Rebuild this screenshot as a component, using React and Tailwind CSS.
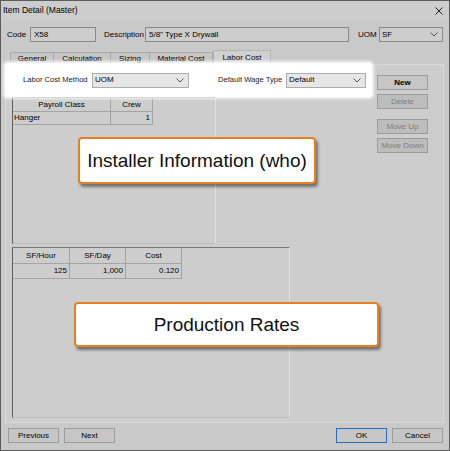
import React from "react";

const Chevron = () => (
  <svg width="8" height="5" viewBox="0 0 8 5" className="shrink-0">
    <path d="M0.5 0.5 L4 4 L7.5 0.5" fill="none" stroke="#555" strokeWidth="1" />
  </svg>
);

const Select = ({ value, className }) => (
  <div className={`h-[15px] shrink-0 flex items-center justify-between pl-[2px] pr-[4px] border ${className}`}>
    <span>{value}</span>
    <Chevron />
  </div>
);

const Btn = ({ label, disabled, primary, className = "" }) => (
  <div
    className={`w-[51px] h-[15px] shrink-0 whitespace-nowrap flex items-center justify-center border ${
      primary ? "border-[#2a6bc4] border-[1.5px]" : "border-[#9c9c9c]"
    } ${disabled ? "bg-[#bdbdbd] text-[#7d7d7d]" : "bg-[#c6c6c6] text-black"} ${className}`}
  >
    {label}
  </div>
);

const Callout = ({ text, className }) => (
  <div
    className={`absolute bg-white border-2 border-[#e8801f] rounded-[4px] shadow-[2px_3px_3px_rgba(0,0,0,0.45)] flex items-center justify-center text-[19px] text-[#111] ${className}`}
  >
    {text}
  </div>
);

export default function App() {
  const tabs = [
    { name: "General", w: "w-[44px]" },
    { name: "Calculation", w: "w-[58px]" },
    { name: "Sizing", w: "w-[40px]" },
    { name: "Material Cost", w: "w-[64px]" },
  ];

  return (
    <div className="relative w-[450px] h-[451px] bg-[#c9c9c9] border border-[#5c5c5c] flex flex-col font-['Liberation_Sans',Arial,sans-serif] text-[8px] leading-none text-black overflow-hidden whitespace-nowrap">
      {/* title bar */}
      <div className="h-[19px] flex items-center justify-between pl-[2px] pr-[6px] bg-[#cdcdcd]">
        <span className="text-[8.5px]">Item Detail (Master)</span>
        <svg width="8" height="8" viewBox="0 0 8 8">
          <path d="M0.5 0.5 L7.5 7.5 M7.5 0.5 L0.5 7.5" stroke="#222" strokeWidth="1" />
        </svg>
      </div>

      {/* code / description / uom */}
      <div className="mt-[7px] h-[15px] flex items-center pl-[6px]">
        <span className="w-[23px] shrink-0">Code</span>
        <div className="w-[66px] h-[15px] shrink-0 flex items-center pl-[3px] bg-[#cdcdcd] border border-[#8a8a8a]">X58</div>
        <span className="ml-[8px] w-[41px] shrink-0">Description</span>
        <div className="w-[204px] h-[15px] shrink-0 flex items-center pl-[3px] bg-[#cdcdcd] border border-[#8a8a8a]">5/8" Type X Drywall</div>
        <span className="ml-[9px] w-[21px] shrink-0">UOM</span>
        <Select value="SF" className="w-[64px] bg-[#cdcdcd] border-[#8a8a8a]" />
      </div>

      {/* tabs */}
      <div className="mt-[7px] h-[15px] flex items-end pl-[9px]">
        {tabs.map((t) => (
          <div
            key={t.name}
            className={`${t.w} h-[12px] flex items-center justify-center border border-b-0 border-[#a9a9a9] -ml-px first:ml-0 bg-[#c6c6c6]`}
          >
            {t.name}
          </div>
        ))}
        <div className="w-[58px] h-[15px] flex items-start pt-[3px] justify-center border border-b-0 border-[#b5b5b5] bg-[#d0d0d0] -mb-px relative z-10">
          Labor Cost
        </div>
      </div>

      {/* panel */}
      <div className="ml-[4px] w-[439px] h-[359px] border border-[#dadada] bg-[#cdcdcd] flex">
        <div className="w-[366px] shrink-0 flex flex-col">
          {/* highlighted row */}
          <div className="-mt-[2px] -ml-[1px] w-[367px] h-[34px] bg-white rounded-[3px] shadow-[0_0_3px_2px_rgba(255,255,255,0.8)] flex items-center relative z-20">
            <span className="ml-[18px] w-[69px] shrink-0 text-[7.6px] text-[#222]">Labor Cost Method</span>
            <Select value="UOM" className="w-[97px] bg-[#e6e6e6] border-[#adadad]" />
            <span className="ml-[29px] w-[68px] shrink-0 text-[7.6px] text-[#222]">Default Wage Type</span>
            <Select value="Default" className="w-[80px] bg-[#e6e6e6] border-[#adadad]" />
          </div>

          {/* installer grid */}
          <div className="ml-[6px] w-[204px] h-[147px] border-l border-t border-l-[#5e5e5e] border-t-[#777] border-r border-b border-r-[#e2e2e2] border-b-[#bdbdbd] flex flex-col">
            <div className="flex h-[14px]">
              <div className="w-[98px] flex items-center justify-center border-r border-b border-[#a3a3a3]">Payroll Class</div>
              <div className="w-[42px] flex items-center justify-center border-r border-b border-[#a3a3a3]">Crew</div>
            </div>
            <div className="flex h-[13px]">
              <div className="w-[98px] flex items-center pl-[1px] border-r border-b border-[#a3a3a3]">Hanger</div>
              <div className="w-[42px] flex items-center justify-end pr-[2px] border-r border-b border-[#a3a3a3]">1</div>
            </div>
          </div>

          {/* production grid */}
          <div className="mt-[3px] ml-[6px] w-[278px] h-[171px] border-l border-t border-l-[#5e5e5e] border-t-[#777] border-r border-b border-r-[#e2e2e2] border-b-[#bdbdbd] flex flex-col">
            <div className="flex h-[16px]">
              <div className="w-[57px] flex items-center justify-center border-r border-b border-[#a3a3a3]">SF/Hour</div>
              <div className="w-[56px] flex items-center justify-center border-r border-b border-[#a3a3a3]">SF/Day</div>
              <div className="w-[56px] flex items-center justify-center border-r border-b border-[#a3a3a3]">Cost</div>
            </div>
            <div className="flex h-[15px]">
              <div className="w-[57px] flex items-center justify-end pr-[2px] border-r border-b border-[#a3a3a3]">125</div>
              <div className="w-[56px] flex items-center justify-end pr-[2px] border-r border-b border-[#a3a3a3]">1,000</div>
              <div className="w-[56px] flex items-center justify-end pr-[2px] border-r border-b border-[#a3a3a3]">0.120</div>
            </div>
          </div>
        </div>

        {/* right buttons */}
        <div className="ml-[5px] pt-[10px] flex flex-col">
          <Btn label="New" className="font-bold" />
          <Btn label="Delete" disabled className="mt-[4px]" />
          <Btn label="Move Up" disabled className="mt-[10px]" />
          <Btn label="Move Down" disabled className="mt-[4px]" />
        </div>
      </div>

      {/* bottom buttons */}
      <div className="mt-[5px] flex items-center pl-[7px] pr-[6px]">
        <Btn label="Previous" />
        <Btn label="Next" className="ml-[5px]" />
        <div className="flex-1" />
        <Btn label="OK" primary />
        <Btn label="Cancel" className="ml-[5px]" />
      </div>

      <Callout text="Installer Information (who)" className="left-[77px] top-[136px] w-[238px] h-[47px]" />
      <Callout text="Production Rates" className="left-[73px] top-[301px] w-[305px] h-[45px]" />
    </div>
  );
}
